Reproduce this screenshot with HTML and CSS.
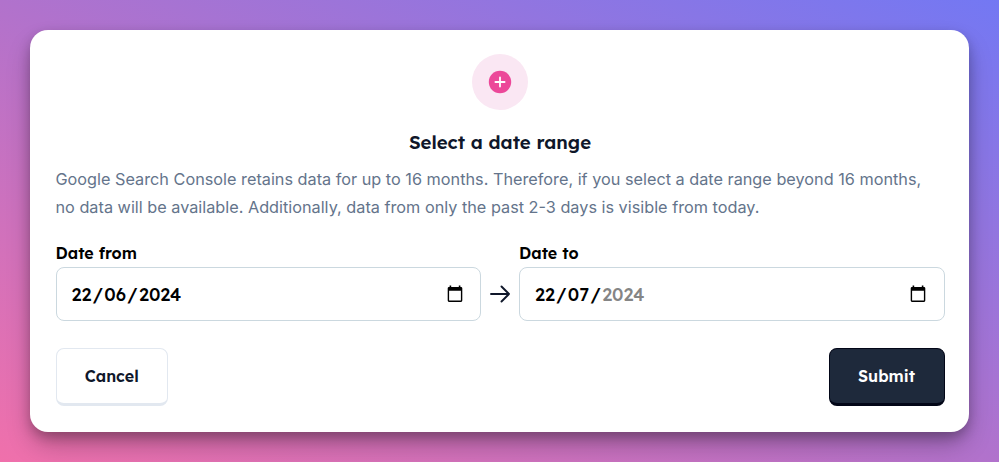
FILE: index.html
```html
<!DOCTYPE html>
<html lang="en">
<head>
<meta charset="utf-8">
<title>Select a date range</title>
<link rel="stylesheet" href="styles.css">
</head>
<body>
<main class="card">
  <div class="badge">
    <svg width="28" height="28" viewBox="0 0 28 28"><circle cx="14" cy="14" r="11.2" fill="#ec4899"/><path d="M14 9.4v9.2M9.4 14h9.2" stroke="#fff" stroke-width="1.8" stroke-linecap="round"/></svg>
  </div>
  <h1 class="title">Select a date range</h1>
  <p class="description"><span class="line">Google Search Console retains data for up to 16 months. Therefore, if you select a date range beyond 16 months,</span> <span class="line">no data will be available. Additionally, data from only the past 2-3 days is visible from today.</span></p>
  <div class="range">
    <div class="field">
      <div class="label">Date from</div>
      <div class="input"><span class="date"><span>22</span><i>/</i><span>06</span><i>/</i><span>2024</span></span>
        <svg class="calendar" width="16" height="18" viewBox="0 0 16 18"><path fill="#000" fill-rule="evenodd" d="M2.6.6h1.600V2h7.600V.6h1.600V2h.6A1.300 1.300 0 0 1 15.300 3.300v12.300A1.300 1.300 0 0 1 14 16.900H2A1.300 1.300 0 0 1 .7 15.600V3.300A1.300 1.300 0 0 1 2 2h.6zM2.100 5.700v9.800h11.800V5.700z"/></svg>
      </div>
    </div>
    <svg class="arrow" width="20" height="18" viewBox="0 0 20 18"><path d="M1 9h18M11.500 1.500 19 9l-7.500 7.500" fill="none" stroke="#0f172a" stroke-width="1.900" stroke-linecap="round" stroke-linejoin="round"/></svg>
    <div class="field">
      <div class="label">Date to</div>
      <div class="input"><span class="date"><span>22</span><i>/</i><span>07</span><i>/</i><span class="muted">2024</span></span>
        <svg class="calendar" width="16" height="18" viewBox="0 0 16 18"><path fill="#000" fill-rule="evenodd" d="M2.6.6h1.600V2h7.600V.6h1.600V2h.6A1.300 1.300 0 0 1 15.300 3.300v12.300A1.300 1.300 0 0 1 14 16.900H2A1.300 1.300 0 0 1 .7 15.600V3.300A1.300 1.300 0 0 1 2 2h.6zM2.100 5.700v9.800h11.800V5.700z"/></svg>
      </div>
    </div>
  </div>
  <div class="actions">
    <button class="button cancel">Cancel</button>
    <button class="button submit">Submit</button>
  </div>
</main>
</body>
</html>
```
FILE: styles.css
```css
* { box-sizing: border-box; }
body {
  margin: 0;
  height: 462px;
  padding: 30px;
  overflow: hidden;
  background: linear-gradient(to top right, #f070ab, #b172cc 50%, #7378f3);
  font-family: Lexend, Inter, sans-serif;
  font-feature-settings: "cv11";
}
.card {
  height: 402px;
  padding: 24px 24.500px 0 25.500px;
  border-radius: 18px;
  background: #fff;
  box-shadow: 0 14px 26px -3px rgb(0 0 0 / 28%), 0 5px 12px rgb(0 0 0 / 22%);
}
.badge {
  width: 56px;
  height: 56px;
  margin: 0 auto;
  display: grid;
  place-items: center;
  border-radius: 50%;
  background: #fae7f3;
}
.title {
  margin: 18px 0 0;
  font-size: 18.600px;
  line-height: 29px;
  font-weight: 600;
  text-align: center;
  color: #0f172a;
}
.description {
  margin: 8px 0 0;
  font: 400 16.260px/28px Inter, sans-serif;
  font-feature-settings: normal;
  color: #64748b;
}
.line { display: block; white-space: nowrap; }
.range { display: flex; align-items: flex-end; margin-top: 20px; }
.field { flex: 1; }
.label { font-size: 16px; line-height: 25px; font-weight: 600; color: #000; }
.input {
  height: 54px;
  margin-top: 1px;
  padding: 0 17.500px 0 15px;
  display: flex;
  align-items: center;
  justify-content: space-between;
  border: 1px solid #cbd8df;
  border-radius: 8px;
}
.date { display: flex; font-size: 18.100px; font-weight: 500; color: #000; }
.date i { width: 13px; text-align: center; font-style: normal; }
.muted { color: #858585; }
.arrow { margin: 0 9px 18px; }
.actions { display: flex; justify-content: space-between; margin-top: 27px; }
.button {
  height: 58px;
  padding: 0;
  border-radius: 8px;
  font: 600 16px/24px Lexend, Inter, sans-serif;
  font-feature-settings: "cv11";
}
.cancel { width: 112.500px; color: #0f172a; background: #fff; border: 1px solid #e2e8f0; border-bottom-width: 3px; }
.submit { width: 116px; color: #fff; background: #1e293b; border: 1px solid #020617; border-bottom-width: 3px; }
```
